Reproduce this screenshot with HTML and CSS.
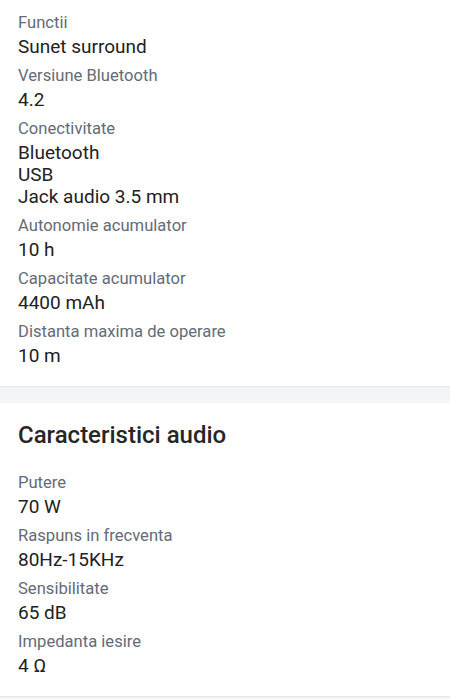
FILE: index.html
```html
<!DOCTYPE html>
<html lang="ro">
<head>
  <meta charset="UTF-8" />
  <meta name="viewport" content="width=device-width, initial-scale=1.0" />
  <title>Specificatii</title>
  <link rel="stylesheet" href="styles.css">
</head>
<body>

  <!-- Specificatii generale (continuare) -->
  <section class="section section-top">
    <dl class="specs">
      <div class="spec">
        <dt>Functii</dt>
        <dd>Sunet surround</dd>
      </div>
      <div class="spec">
        <dt>Versiune Bluetooth</dt>
        <dd>4.2</dd>
      </div>
      <div class="spec">
        <dt>Conectivitate</dt>
        <dd>Bluetooth<br/>USB<br/>Jack audio 3.5 mm</dd>
      </div>
      <div class="spec">
        <dt>Autonomie acumulator</dt>
        <dd>10 h</dd>
      </div>
      <div class="spec">
        <dt>Capacitate acumulator</dt>
        <dd>4400 mAh</dd>
      </div>
      <div class="spec">
        <dt>Distanta maxima de operare</dt>
        <dd>10 m</dd>
      </div>
    </dl>
  </section>

  <div class="divider"></div>

  <!-- Caracteristici audio -->
  <section class="section">
    <h2>Caracteristici audio</h2>
    <dl class="specs">
      <div class="spec">
        <dt>Putere</dt>
        <dd>70 W</dd>
      </div>
      <div class="spec">
        <dt>Raspuns in frecventa</dt>
        <dd>80Hz-15KHz</dd>
      </div>
      <div class="spec">
        <dt>Sensibilitate</dt>
        <dd>65 dB</dd>
      </div>
      <div class="spec">
        <dt>Impedanta iesire</dt>
        <dd>4 Ω</dd>
      </div>
    </dl>
  </section>

  <div class="divider"></div>

</body>
</html>
```

FILE: styles.css
```css
body {
  margin: 0;
  padding: 0;
  font-family: Roboto, "Liberation Sans", Arial, sans-serif;
  background-color: #fff;
  color: #222;
}
.section {
  background-color: #fff;
  padding: 17px 18px 19px;
}
.section-top {
  padding-top: 12px;
}
h2 {
  margin: 0 0 22px;
  font-size: 24px;
  line-height: 30px;
  font-weight: 500;
  color: #262626;
}
.specs {
  margin: 0;
  display: flex;
  flex-direction: column;
  gap: 7px;
}
.spec dt {
  font-size: 16.6px;
  line-height: 22px;
  color: #646b77;
}
.spec dd {
  margin: 2px 0 0;
  font-size: 19px;
  line-height: 22px;
  color: #222;
}
.divider {
  height: 16px;
  background-color: #f4f5f8;
  border-top: 1px solid #e4e6eb;
}
```
